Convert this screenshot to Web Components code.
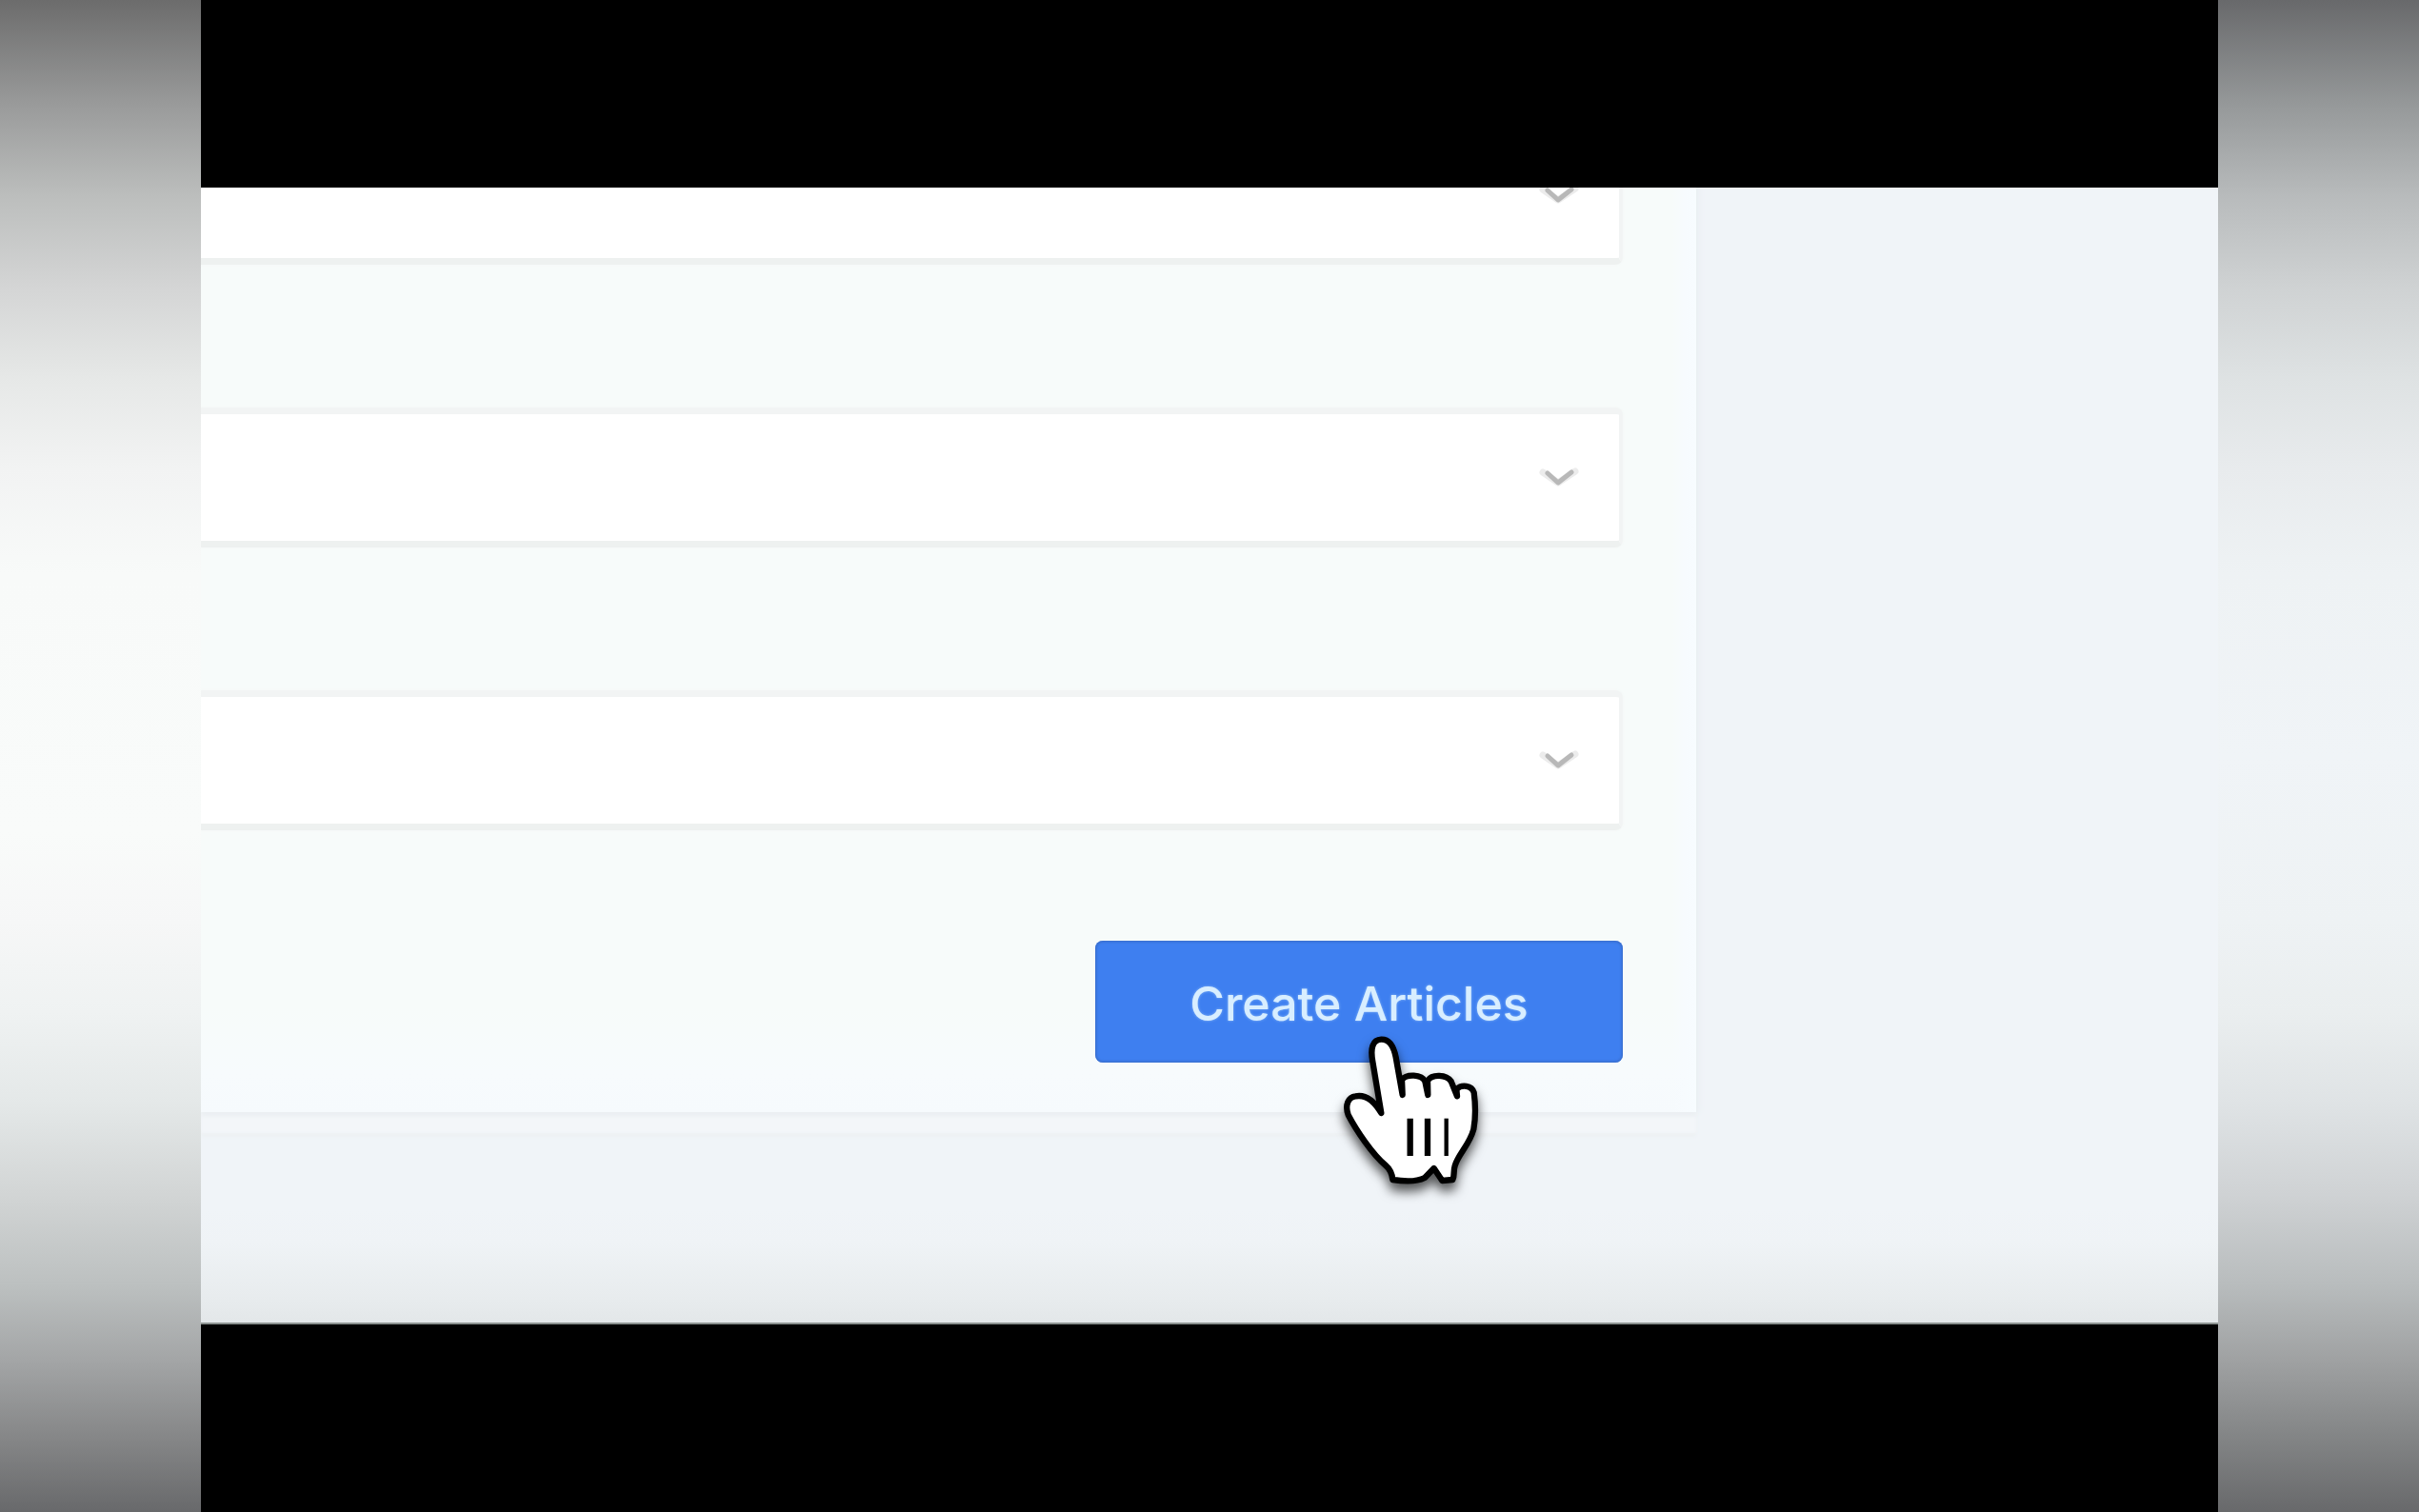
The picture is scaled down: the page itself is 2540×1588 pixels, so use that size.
<!DOCTYPE html>
<html lang="en">
<head>
  <meta charset="utf-8">
  <title>Create Articles</title>
  <style>
    body { margin: 0; font-family: Inter, "Liberation Sans", sans-serif; }
  </style>
</head>
<body>
  <video-frame>
    <article-form>
      <select-field label="First option"></select-field>
      <select-field label="Second option"></select-field>
      <select-field label="Third option"></select-field>
      <primary-button slot="action">Create Articles</primary-button>
    </article-form>
  </video-frame>

  <script>
    class VideoFrame extends HTMLElement {
      constructor() {
        super();
        this.attachShadow({ mode: 'open' });

        this.shadowRoot.innerHTML = `
          <style>
            :host { display: flex; min-height: 100vh; }
            .side { flex: 0 0 211px; }
            .left {
              background: linear-gradient(#6c6c6c, #9a9b9b 7%, #bcbebd 13%, #d4d5d5 19%, #e6e8e7 25%,
                #f2f3f3 31%, #f8faf9 38%, #f9fbfa 55%, #f6f7f7 61%, #eff2f2 67%, #e4e8e8 73%,
                #d2d5d5 79%, #bcc0c0 85%, #a3a5a6 90%, #868788 95%, #68696b);
            }
            .right {
              background: linear-gradient(#68696b, #96999a 7%, #b8bbbc 13%, #cfd2d3 19%, #dee2e3 25%,
                #e8ebed 31%, #eef2f4 38%, #f0f4f7 50%, #eef2f4 61%, #eaeeef 67%, #dfe3e5 73%,
                #cfd2d4 79%, #b8bcbd 85%, #9fa1a2 90%, #838586 95%, #68696b);
            }
            .picture { flex: 1; min-width: 0; display: flex; flex-direction: column; background: #000; }
            .bar { flex: 1; }
            .screen {
              overflow: hidden;
              padding-bottom: 221px;
              background: linear-gradient(to top, #e3e7e9, #e8ecee 28px, #eff3f6 84px, #f0f4f8 120px);
              border-bottom: 2px solid #8b9290;
            }
          </style>
          <div class="side left"></div>
          <main class="picture">
            <div class="bar"></div>
            <div class="screen"><slot></slot></div>
            <div class="bar"></div>
          </main>
          <div class="side right"></div>
        `;
      }
    }

    class ArticleForm extends HTMLElement {
      constructor() {
        super();
        this.attachShadow({ mode: 'open' });

        this.shadowRoot.innerHTML = `
          <style>
            :host { display: block; margin-right: 548px; }
            form {
              display: flex;
              flex-direction: column;
              gap: 150px;
              margin-top: -66px;
              padding: 0 77px 52px 0;
              background: linear-gradient(to left, #f7fcff, #f7fbfe 12px, transparent 26px),
                linear-gradient(to top, #f6fafd, #f7fbfd 40px, #f7fbfa 110px);
              box-shadow: 0 4px 4px #ebeff2, 4px 0 6px #ebf0f4, 0 22px 2px #f3f6f9, 0 26px 3px #edf1f4;
            }
            .actions { display: flex; justify-content: flex-end; margin-top: -34px; }
          </style>
          <form>
            <slot></slot>
            <div class="actions"><slot name="action"></slot></div>
          </form>
        `;
      }
    }

    class SelectField extends HTMLElement {
      constructor() {
        super();
        this.attachShadow({ mode: 'open' });

        this.shadowRoot.innerHTML = `
          <style>
            :host { display: grid; align-items: center; }
            select, svg { grid-area: 1 / 1; }
            select {
              appearance: none;
              box-sizing: border-box;
              width: 100%;
              height: 147px;
              margin: 0;
              padding: 0 96px 0 32px;
              font: inherit;
              font-size: 48px;
              background: #fff;
              border: solid #f2f4f4;
              border-width: 7px 4px 7px 0;
              border-bottom-color: #eef1f0;
              border-radius: 0 8px 8px 0;
              box-shadow: 0 0 3px #f3f6f5;
              outline: none;
            }
            svg { justify-self: end; margin: 2px 45px 0 0; pointer-events: none; }
          </style>
          <select><option></option></select>
          <svg width="44" height="24" viewBox="0 0 44 24" fill="none" stroke-linecap="round" stroke-linejoin="round">
            <path d="M5 5 L21 16 L39 4" stroke="#ececec" stroke-width="7"/>
            <path d="M10 6 L21 16 L35 5" stroke="#b8b8b8" stroke-width="5"/>
          </svg>
        `;
      }

      connectedCallback() {
        this.shadowRoot.querySelector('select').setAttribute('aria-label', this.getAttribute('label'));
      }
    }

    class PrimaryButton extends HTMLElement {
      constructor() {
        super();
        this.attachShadow({ mode: 'open' });

        this.shadowRoot.innerHTML = `
          <style>
            :host { display: block; position: relative; }
            button {
              display: block;
              min-width: 554px;
              height: 128px;
              padding: 4px 64px 0;
              border: 0;
              border-radius: 8px;
              background: #3e7ff0;
              box-shadow: inset 0 0 3px 1px #3769c4;
              color: #d8eeff;
              font: 500 50px/64px Inter, "Liberation Sans", sans-serif;
              text-shadow: 0 0 3px rgba(190, 225, 255, .6);
              white-space: nowrap;
            }
            hand-cursor { position: absolute; left: 230px; top: 72px; }
          </style>
          <button type="button"><slot></slot></button>
          <hand-cursor></hand-cursor>
        `;
      }
    }

    class HandCursor extends HTMLElement {
      constructor() {
        super();
        this.attachShadow({ mode: 'open' });

        this.shadowRoot.innerHTML = `
          <style>
            :host { display: block; pointer-events: none; }
            svg { display: block; overflow: visible; filter: drop-shadow(0 8px 6px rgba(0, 0, 0, .65)); }
          </style>
          <svg width="200" height="200" viewBox="0 0 600 600" stroke="#000" stroke-width="19" stroke-linejoin="round" stroke-linecap="butt" aria-hidden="true">
            <path fill="#fff" d="M211 327 L184 165 C176 122 184 96 211 95 C239 94 251 121 257 151
              L278 270 L276 222 C290 203 338 204 349 227 L358 270 L357 225
              C372 203 416 206 431 227 L450 274 L448 252 C464 236 496 239 503 262
              C508 300 508 344 502 378 C489 427 454 456 443 493 C437 512 443 524 436 537
              L403 540 L377 501 L348 531 C322 544 278 542 247 537 C245 515 238 503 225 492
              C183 457 132 381 107 333 C96 302 107 276 130 274 C160 268 186 284 211 327 Z"/>
            <path fill="none" d="M302 344 V462 M357 344 V462"/>
            <path fill="none" stroke-width="13" d="M416 344 V462"/>
          </svg>
        `;
      }
    }

    customElements.define('hand-cursor', HandCursor);
    customElements.define('primary-button', PrimaryButton);
    customElements.define('select-field', SelectField);
    customElements.define('article-form', ArticleForm);
    customElements.define('video-frame', VideoFrame);
  </script>
</body>
</html>
